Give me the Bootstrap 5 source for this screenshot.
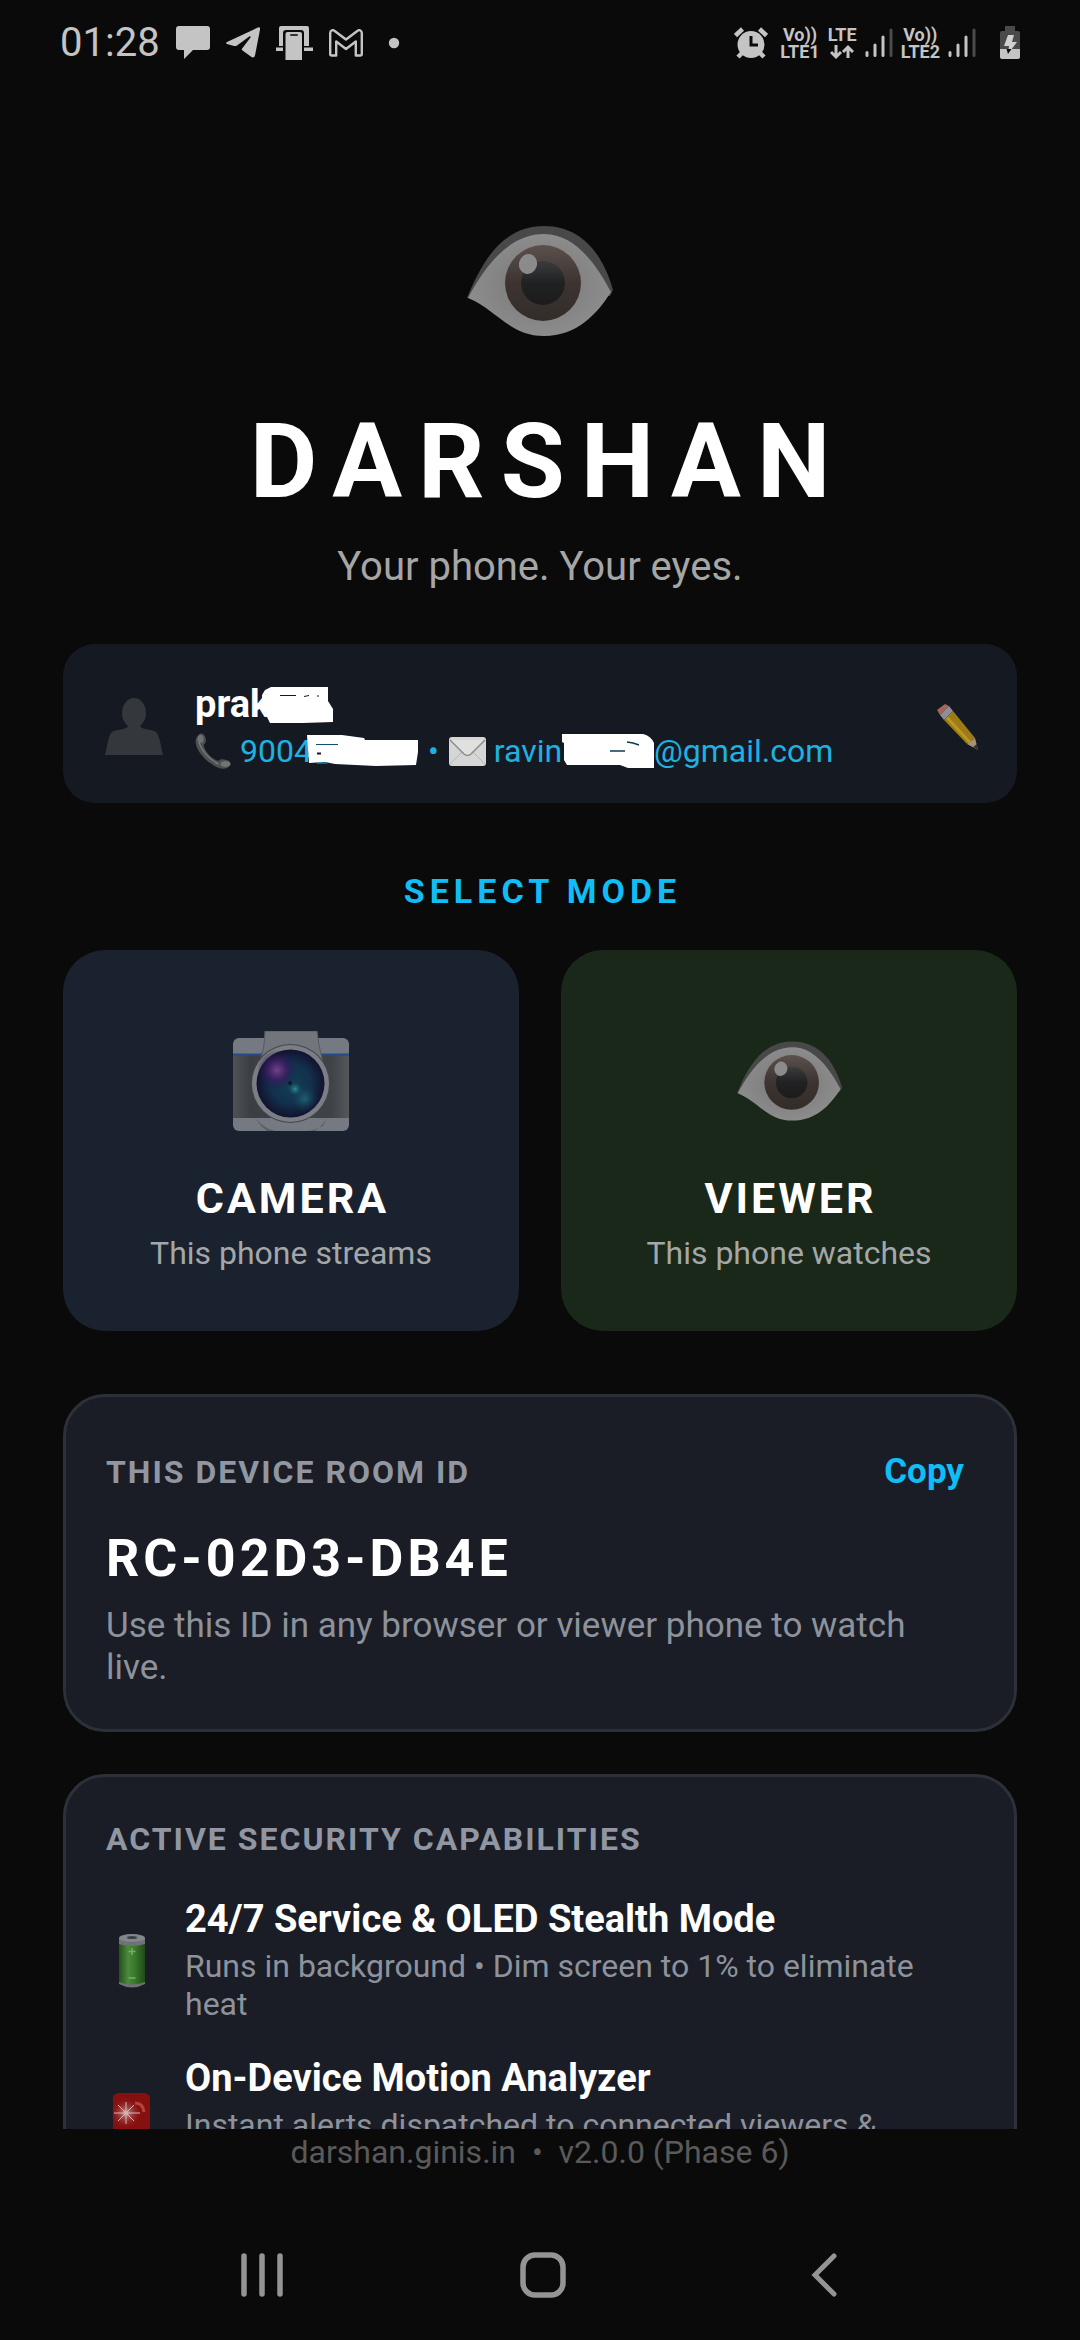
<!DOCTYPE html>
<html lang="en" data-bs-theme="dark">
<head>
<meta charset="utf-8">
<meta name="viewport" content="width=device-width, initial-scale=1">
<title>Darshan</title>
<link href="https://cdn.jsdelivr.net/npm/bootstrap@5.3.0/dist/css/bootstrap.min.css" rel="stylesheet">
<style>
  body { background: #0a0a0a; color: #fff; font-family: Roboto, "Noto Sans", sans-serif; font-size: 32px; line-height: 38px; }
  svg { display: block; flex: none; }
  .btn { --bs-btn-padding-x: 0px; --bs-btn-padding-y: 0px; --bs-btn-border-width: 0px; }

  .status-bar { height: 85px; padding: 0 60px; color: #c4c4c4; }
  .clock { font-size: 40px; line-height: 48px; }
  .net-label { font-size: 18px; line-height: 17px; font-weight: 700; text-align: center; }

  .scroller { min-height: 0; overflow-y: auto; scrollbar-width: none; padding: 141px 63px 0; }
  .scroller::-webkit-scrollbar { display: none; }
  .brand { font-size: 104px; line-height: 122px; letter-spacing: 16px; padding-left: 16px; margin: 65px 0 20px; }
  .tagline { font-size: 40px; line-height: 48px; color: #a6a6a6; }

  .profile { background: #151922; border-radius: 32px; padding: 38px 38px 31px 42px; margin-top: 53px; }
  .profile-name { font-size: 38px; line-height: 45px; margin-bottom: 3px; }
  .contact { color: #1db2e2; line-height: 42px; }
  .contact-dot { margin: 0 10px; }
  .blob-name { margin-left: -8px; }
  .blob-phone { margin-left: -5px; }

  .mode-heading { font-size: 34px; line-height: 40px; letter-spacing: 5px; padding-left: 5px; color: #11bdf5; margin: 68px 0 39px; }
  .modes { gap: 42px; }
  .mode { --bs-btn-border-radius: 42px; padding: 81px 20px 59px; flex: 1 1 0; }
  .mode-camera, .mode-camera:hover { background: #1a222f; }
  .mode-viewer, .mode-viewer:hover { background: #1a281a; }
  .mode-pic { height: 100px; margin-bottom: 43px; }
  .mode-name { font-size: 43px; line-height: 48px; letter-spacing: 3px; padding-left: 3px; color: #fff; margin-bottom: 12px; }
  .mode-note { font-size: 32px; line-height: 38px; color: #a4a7a8; }

  .panel { background: #1a1d25; border: 3px solid #2c3039; border-radius: 42px; padding: 43px 50px 40px 40px; }
  .panel-room { margin: 63px 0 42px; padding-top: 55px; }
  .panel-title { font-size: 32px; line-height: 38px; letter-spacing: 2px; color: #9097a2; }
  .copy { font-size: 35px; line-height: 40px; color: #0fbdf7; }
  .room-id { font-size: 52px; line-height: 61px; letter-spacing: 4px; margin: 36px 0 16px; }
  .room-note { font-size: 35px; line-height: 42px; color: #8d929c; }

  .caps { margin-top: 40px; gap: 34px; }
  .cap-item { gap: 27px; min-height: 125px; }
  .cap-pic { width: 52px; }
  .cap-text { min-height: 125px; }
  .cap-name { font-size: 38px; line-height: 43px; margin-bottom: 6px; }
  .cap-note { color: #8d929c; }

  .site-foot { color: #5a5a5a; padding: 4px 0 39px; }
  .soft-keys { height: 130px; padding-left: 6px; color: #949494; }
  .soft-keys .btn { width: 281px; color: inherit; }
</style>
<script src="https://cdn.jsdelivr.net/npm/bootstrap@5.3.0/dist/js/bootstrap.bundle.min.js"></script>
</head>
<body>
<svg width="0" height="0" class="position-absolute" aria-hidden="true">
  <defs>
    <linearGradient id="iris" x1="0" y1="0" x2="0" y2="1"><stop offset="0" stop-color="#5a504c"/><stop offset=".5" stop-color="#3d3431"/><stop offset="1" stop-color="#332c29"/></linearGradient>
    <linearGradient id="pupil" x1="0" y1="0" x2="0" y2="1"><stop offset="0" stop-color="#3c3c3d"/><stop offset=".5" stop-color="#202122"/><stop offset="1" stop-color="#1d1c1c"/></linearGradient>
    <radialGradient id="white" cx=".5" cy=".5" r=".55"><stop offset="0" stop-color="#777"/><stop offset=".6" stop-color="#858585"/><stop offset="1" stop-color="#8e8e8e"/></radialGradient>
    <symbol id="eye" viewBox="0 0 146 110">
      <path d="M0 72C14 38 34 0 77 0c40 0 60 32 69 64l-3 6z" fill="#484848"/>
      <path d="M1 72C18 40 42 8 77 8c33 0 54 34 67 58-14 22-34 44-67 44C43 110 30 84 1 72z" fill="url(#white)"/>
      <circle cx="76" cy="57" r="38" fill="url(#iris)"/>
      <circle cx="76" cy="57" r="22" fill="url(#pupil)"/>
      <ellipse cx="61" cy="38" rx="9" ry="10" fill="#8b8b8b" transform="rotate(15 61 38)"/>
    </symbol>
    <symbol id="signal" viewBox="0 0 28 30">
      <g stroke="currentColor" stroke-width="3" stroke-linecap="round"><path d="M2 24.500v3M10 17v10.500M18 9v18.500"/><path d="M26 2v25.500" opacity=".35"/></g>
    </symbol>
  </defs>
</svg>

<div class="d-flex flex-column vh-100">
  <header class="status-bar d-flex align-items-center flex-shrink-0">
    <span class="clock me-3">01:28</span>
    <svg class="me-3" width="34" height="34" viewBox="0 0 34 34" fill="currentColor"><path d="M3 0h28a3 3 0 0 1 3 3v18a3 3 0 0 1-3 3H17L8 33V24H3a3 3 0 0 1-3-3V3a3 3 0 0 1 3-3z"/></svg>
    <svg class="me-3" width="34" height="31" viewBox="0 0 34 31" fill="currentColor"><path d="M1 15 32 .5c1.500-.6 2.400.3 2 2l-5 26c-.5 2-2 2.500-3.500 1.500l-9-6.500c-1-.8-1-1.500 0-2.500l8-10.500c.5-1-.3-1.500-1.200-.9L11 18.500c-1 .7-2 .7-3 .4l-7-2c-1.200-.5-1.200-1.300 0-1.900z"/></svg>
    <svg class="me-3" width="37" height="34" viewBox="0 0 37 34"><path d="M5 0h26a2 2 0 0 1 2 2v18H3V2a2 2 0 0 1 2-2zM0 21.500h37V25H0z" fill="currentColor"/><path d="M7 34V7a3 3 0 0 1 3-3h15a3 3 0 0 1 3 3v27z" fill="#0a0a0a"/><path d="M9.500 34V8a2 2 0 0 1 2-2h12.500a2 2 0 0 1 2 2v26z" fill="currentColor"/><path d="M15 9h6" stroke="#333" stroke-width="2" stroke-linecap="round"/></svg>
    <svg width="34" height="28" viewBox="0 0 34 28" fill="none" stroke="currentColor" stroke-width="2.400" stroke-linejoin="round"><path d="M1.200 25V4c0-3 3-3.500 4.500-2L17 10.500 28.300 2c1.500-1.500 4.500-1 4.500 2v21c0 1-.5 1.500-1.500 1.500h-4.500V12.500L17 20 7.200 12.500v14H2.700c-1 0-1.500-.5-1.500-1.500z"/></svg>
    <svg class="ms-4" width="18" height="12" viewBox="0 0 18 12" fill="currentColor"><circle cx="7" cy="6" r="5.200"/></svg>

    <svg class="ms-auto me-2" width="34" height="32" viewBox="0 0 34 32"><g fill="none" stroke="currentColor" stroke-width="4.500"><path d="m1.500 8.500 7-6.500M32.500 8.500l-7-6.500"/><path d="m4 30 5-5M30 30l-5-5"/></g><circle cx="17" cy="17.500" r="13.500" fill="currentColor"/><path d="M17 9v9h7" fill="none" stroke="#0a0a0a" stroke-width="3"/></svg>
    <span class="net-label ms-1">Vo))<br>LTE1</span>
    <span class="net-label ms-2 me-2">LTE<svg class="mx-auto" width="24" height="17" viewBox="0 0 24 17" fill="none" stroke="currentColor" stroke-width="3"><path d="M6 2v12M1 9l5 5 5-5M18 15V4M13 9l5-5 5 5"/></svg></span>
    <svg class="me-2" width="28" height="30"><use href="#signal"/></svg>
    <span class="net-label me-2">Vo))<br>LTE2</span>
    <svg width="28" height="30"><use href="#signal"/></svg>
    <svg class="ms-4" width="20" height="33" viewBox="0 0 20 33"><path d="M5 0h10v5h3a2 2 0 0 1 2 2v16H0V7a2 2 0 0 1 2-2h3z" fill="#4a4a4a"/><path d="M0 23h20v8a2 2 0 0 1-2 2H2a2 2 0 0 1-2-2z" fill="currentColor"/><path d="M8 9h6l-2 7h5L8 28l1-8H4z" fill="#d0d0d0"/><path d="M6.500 23h5L8 28z" fill="#0a0a0a"/></svg>
  </header>

  <main class="scroller flex-grow-1">
    <svg class="mx-auto" width="146" height="110" role="img" aria-label="Eye"><use href="#eye"/></svg>
    <h1 class="brand fw-bold text-center">DARSHAN</h1>
    <p class="tagline text-center mb-0">Your phone. Your eyes.</p>

    <section class="profile d-flex align-items-center">
      <svg width="58" height="58" viewBox="0 0 58 58" fill="#34373c"><ellipse cx="29" cy="15" rx="12" ry="15"/><path d="M23 22h12v6c1 4 14 3 17 7 3 5 4 14 6 22H0c2-8 3-17 6-22 3-4 16-3 17-7z"/></svg>
      <div class="ms-4 ps-2 flex-grow-1">
        <div class="profile-name fw-bold d-flex align-items-center">prak
          <svg class="blob-name" width="72" height="36" viewBox="0 0 72 36"><path d="M0 8 3 3l6-3h57v14l5 8v13l-30 1H8l-3-6-4-3z" fill="#fff"/><path d="M18 8.500h16M42 9.500l5-1M55 9h2" stroke="#151922"/></svg>
        </div>
        <div class="contact d-flex align-items-center">
          <svg class="me-2" width="37" height="36" viewBox="0 0 36 36"><path d="M3 2c3-3 6-1 7 3 1 3 0 6-2 7 1 6 8 14 15 16 1-2 4-2 8-1s5 3 3 6c-3 4-10 3-15 0C9 27 1 18 0 9 0 6 1 4 3 2z" fill="#4e4f51"/><path d="M3 6c1 10 10 20 20 25" fill="none" stroke="#77787a" stroke-width="1.500"/><ellipse cx="5" cy="6" rx="3" ry="4" fill="#707173"/><ellipse cx="30" cy="31" rx="5" ry="3" fill="#727375"/></svg>
          <span>9004</span>
          <svg class="blob-phone" width="111" height="32" viewBox="0 0 111 32"><path d="M0 0h35l22 3 1 2h53v12l-2 13-40 1-41-2-10-2-16 1z" fill="#fff"/><path d="M9 9.500h22" stroke="#12506a"/><path d="M10 18.500h4" stroke="#151922" stroke-width="2"/><path d="M10 28h10" stroke="#1db2e2"/></svg>
          <span class="contact-dot">•</span>
          <svg class="me-2" width="37" height="29" viewBox="0 0 37 29"><rect width="37" height="29" rx="3" fill="#d6d6d6"/><path d="M1 27 14 14M36 27 23 14" stroke="#b5b5b5"/><path d="M1 3l14 14q3.500 3 7 0L36 3" fill="#e0e0e0" stroke="#8d8d8d" stroke-width="1.500"/></svg>
          <span>ravin</span>
          <svg width="92" height="35" viewBox="0 0 92 35"><path d="M0 0h81q8 2 11 9v25H66l-8-3H5l-3-5V9L0 8z" fill="#fff"/><path d="m65 8 6 1 6 2M48 17h15" fill="none" stroke="#0c3c50" stroke-width="1.500"/></svg>
          <span>@gmail.com</span>
        </div>
      </div>
      <button type="button" class="btn" aria-label="Edit profile">
        <svg width="42" height="46" viewBox="0 0 42 46"><path d="M0 6 8 0l4 2-9 9z" fill="#a5655b"/><path d="m3 11 9-9 4 5-9 9z" fill="#8e8d9a"/><path d="m7 16 9-9 22 27-8 6z" fill="#9c7a18"/><path d="m10 13.500 23 25" stroke="#bd961f" stroke-width="3"/><path d="m30 40 8-6 3 12z" fill="#a89072"/><path d="m36 43 4-3 1 6z" fill="#333"/></svg>
      </button>
    </section>

    <h2 class="mode-heading fw-bold text-center">SELECT MODE</h2>
    <div class="modes d-flex">
      <button type="button" class="btn mode mode-camera">
        <span class="mode-pic d-flex align-items-center justify-content-center">
          <svg width="116" height="100" viewBox="0 0 116 100">
            <defs><radialGradient id="lens" cx=".5" cy=".5" r=".5"><stop offset="0" stop-color="#123f55"/><stop offset=".6" stop-color="#12304c"/><stop offset="1" stop-color="#12122e"/></radialGradient>
            <radialGradient id="purple"><stop offset="0" stop-color="#71428c"/><stop offset=".5" stop-color="#3d1d63" stop-opacity=".8"/><stop offset="1" stop-color="#1e1747" stop-opacity="0"/></radialGradient>
            <radialGradient id="teal"><stop offset="0" stop-color="#2c8f9c"/><stop offset="1" stop-color="#125266" stop-opacity="0"/></radialGradient>
            <linearGradient id="grip"><stop offset="0" stop-color="#4e5256"/><stop offset=".15" stop-color="#3b3f43"/><stop offset=".85" stop-color="#3f4347"/><stop offset="1" stop-color="#54585b"/></linearGradient></defs>
            <rect y="7" width="116" height="93" rx="6" fill="#757a82"/>
            <path d="M0 24h116v63H0z" fill="url(#grip)"/>
            <path d="M0 23.500h116" stroke="#244a8a" stroke-width="2"/>
            <path d="M22 87a42 42 0 0 0 72 0l-4 8q-10 5-16 5H42q-10-2-20-13z" fill="#5d6167"/>
            <path d="M32 0h52l2 14 4 18H27l4-18z" fill="#72767c" stroke="#565b62"/>
            <circle cx="57.500" cy="52.500" r="39.500" fill="#44484d"/>
            <circle cx="57.500" cy="52.500" r="38.500" fill="#7b7e84"/>
            <circle cx="57.500" cy="52.500" r="34" fill="url(#lens)"/>
            <circle cx="44" cy="39" r="20" fill="url(#purple)"/>
            <circle cx="72" cy="68" r="14" fill="url(#teal)" opacity=".5"/>
            <circle cx="62" cy="58" r="7" fill="url(#teal)"/>
            <circle cx="57" cy="52" r="2" fill="#0c1a2a"/>
          </svg>
        </span>
        <span class="mode-name d-block fw-bold">CAMERA</span>
        <span class="mode-note d-block">This phone streams</span>
      </button>
      <button type="button" class="btn mode mode-viewer">
        <span class="mode-pic d-flex align-items-center justify-content-center"><svg width="105" height="80"><use href="#eye"/></svg></span>
        <span class="mode-name d-block fw-bold">VIEWER</span>
        <span class="mode-note d-block">This phone watches</span>
      </button>
    </div>

    <section class="panel panel-room">
      <div class="d-flex justify-content-between align-items-baseline">
        <h2 class="panel-title fw-bold mb-0">THIS DEVICE ROOM ID</h2>
        <button type="button" class="btn copy fw-bold">Copy</button>
      </div>
      <div class="room-id fw-bold">RC-02D3-DB4E</div>
      <p class="room-note mb-0">Use this ID in any browser or viewer phone to watch live.</p>
    </section>

    <section class="panel">
      <h2 class="panel-title fw-bold mb-0">ACTIVE SECURITY CAPABILITIES</h2>
      <ul class="caps list-unstyled d-flex flex-column mb-0">
        <li class="cap-item d-flex align-items-center">
          <span class="cap-pic d-flex justify-content-center flex-shrink-0">
            <svg width="26" height="54" viewBox="0 0 26 54"><defs><linearGradient id="cell"><stop offset="0" stop-color="#24501c"/><stop offset=".35" stop-color="#4c8a3c"/><stop offset=".6" stop-color="#3a7a2c"/><stop offset="1" stop-color="#1f4a18"/></linearGradient></defs><path d="M0 4v46q13 7 26 0V4z" fill="#6e7274"/><path d="M0 10q13 4 26 0v38q-13 5-26 0z" fill="url(#cell)"/><ellipse cx="13" cy="4" rx="13" ry="4" fill="#83868a"/><ellipse cx="13" cy="3.500" rx="5" ry="1.500" fill="#3c4043"/><path d="M13 14v7M9.500 17.500h7M9.500 44h7" stroke="#7cab6e" stroke-width="1.500"/></svg>
          </span>
          <div class="cap-text">
            <div class="cap-name fw-bold">24/7 Service &amp; OLED Stealth Mode</div>
            <div class="cap-note">Runs in background • Dim screen to 1% to eliminate heat</div>
          </div>
        </li>
        <li class="cap-item d-flex align-items-center">
          <span class="cap-pic d-flex justify-content-center flex-shrink-0">
            <svg width="42" height="54" viewBox="0 0 42 54"><defs><radialGradient id="flash"><stop offset="0" stop-color="#e8c4c4"/><stop offset=".3" stop-color="#b06868" stop-opacity=".8"/><stop offset="1" stop-color="#8c1a1a" stop-opacity="0"/></radialGradient></defs><path d="M2 36V5q0-4 5-5h27q5 1 5 5v31z" fill="#86100f"/><circle cx="15" cy="20" r="15" fill="url(#flash)"/><path d="M15 9v22M3 20h26M7 12l16 16M23 12 7 28" stroke="#d9b5b5" stroke-width="1"/><path d="M24 10q8 0 9 9" fill="none" stroke="#b4443c" stroke-width="3"/><path d="M0 36h42v18H0z" fill="#8a7c70"/></svg>
          </span>
          <div class="cap-text">
            <div class="cap-name fw-bold">On-Device Motion Analyzer</div>
            <div class="cap-note">Instant alerts dispatched to connected viewers &amp;</div>
          </div>
        </li>
      </ul>
    </section>
  </main>

  <footer class="site-foot text-center flex-shrink-0">darshan.ginis.in &nbsp;•&nbsp; v2.0.0 (Phase 6)</footer>
  <nav class="soft-keys d-flex justify-content-center align-items-center flex-shrink-0">
    <button type="button" class="btn" aria-label="Recent apps"><svg class="mx-auto" width="42" height="44" viewBox="0 0 42 44" stroke="currentColor" stroke-width="5.500" stroke-linecap="round"><path d="M3 3v38M21 3v38M39 3v38"/></svg></button>
    <button type="button" class="btn" aria-label="Home"><svg class="mx-auto" width="46" height="46" viewBox="0 0 46 46" fill="none" stroke="currentColor" stroke-width="5.500"><rect x="3" y="3" width="40" height="40" rx="12"/></svg></button>
    <button type="button" class="btn" aria-label="Back"><svg class="mx-auto" width="26" height="44" viewBox="0 0 26 44" fill="none" stroke="currentColor" stroke-width="5" stroke-linecap="round"><path d="M23 3 4 22l19 19"/></svg></button>
  </nav>
</div>
</body>
</html>
